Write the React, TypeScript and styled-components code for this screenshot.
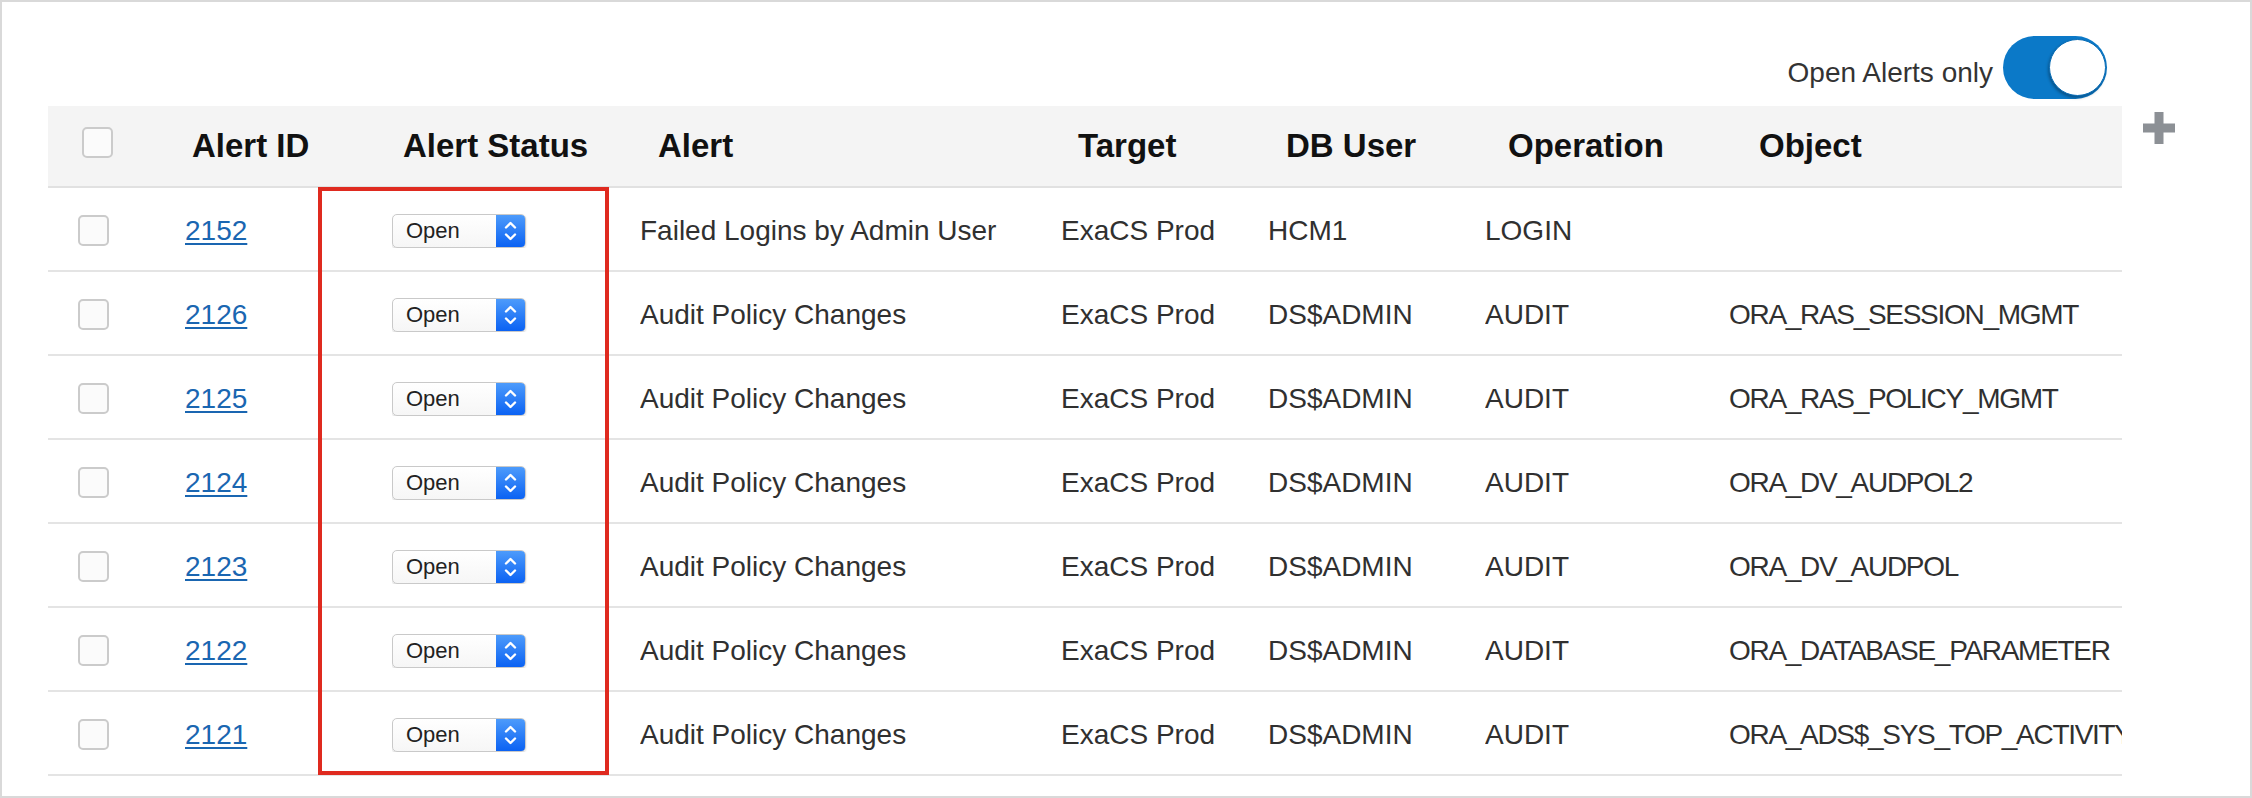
import React from "react";
import styled, { createGlobalStyle } from "styled-components";

const GlobalStyle = createGlobalStyle`
  html, body {
    margin: 0;
    padding: 0;
    background: #fff;
  }
  body {
    font-family: "Liberation Sans", Arial, sans-serif;
    color: #303030;
  }
`;

const HEADER_COLUMNS = "144px 211px 255px 420px 208px 222px 251px 363px";
const BODY_COLUMNS = "137px 207px 248px 421px 207px 217px 244px 393px";

type Alert = {
  id: string;
  name: string;
  target: string;
  dbUser: string;
  operation: string;
  object: string;
};

const alerts: Alert[] = [
  { id: "2152", name: "Failed Logins by Admin User", target: "ExaCS Prod", dbUser: "HCM1", operation: "LOGIN", object: "" },
  { id: "2126", name: "Audit Policy Changes", target: "ExaCS Prod", dbUser: "DS$ADMIN", operation: "AUDIT", object: "ORA_RAS_SESSION_MGMT" },
  { id: "2125", name: "Audit Policy Changes", target: "ExaCS Prod", dbUser: "DS$ADMIN", operation: "AUDIT", object: "ORA_RAS_POLICY_MGMT" },
  { id: "2124", name: "Audit Policy Changes", target: "ExaCS Prod", dbUser: "DS$ADMIN", operation: "AUDIT", object: "ORA_DV_AUDPOL2" },
  { id: "2123", name: "Audit Policy Changes", target: "ExaCS Prod", dbUser: "DS$ADMIN", operation: "AUDIT", object: "ORA_DV_AUDPOL" },
  { id: "2122", name: "Audit Policy Changes", target: "ExaCS Prod", dbUser: "DS$ADMIN", operation: "AUDIT", object: "ORA_DATABASE_PARAMETER" },
  { id: "2121", name: "Audit Policy Changes", target: "ExaCS Prod", dbUser: "DS$ADMIN", operation: "AUDIT", object: "ORA_ADS$_SYS_TOP_ACTIVITY" },
];

const headers = ["Alert ID", "Alert Status", "Alert", "Target", "DB User", "Operation", "Object"];

const Frame = styled.div`
  box-sizing: border-box;
  width: 2252px;
  height: 798px;
  border: 2px solid #d9d9d9;
  padding-left: 46px;
  overflow: hidden;
`;

const Toolbar = styled.div`
  box-sizing: border-box;
  width: 2074px;
  height: 104px;
  display: flex;
  justify-content: flex-end;
  align-items: flex-start;
  gap: 10px;
  padding: 34px 15px 0 0;
`;

const ToggleLabel = styled.span`
  margin-top: 21px;
  font-size: 28px;
  color: #333;
`;

const Track = styled.div<{ $on: boolean }>`
  box-sizing: border-box;
  width: 104px;
  height: 63px;
  border-radius: 32px;
  padding: 3px 1px 3px 3px;
  display: flex;
  justify-content: ${(p) => (p.$on ? "flex-end" : "flex-start")};
  background: ${(p) => (p.$on ? "#0b79c8" : "#c8c8c8")};
`;

const Knob = styled.div`
  box-sizing: border-box;
  width: 57px;
  height: 57px;
  border-radius: 50%;
  background: #fff;
  border: 1px solid #0a6db6;
  box-shadow: -1px 2px 3px rgba(0, 0, 0, 0.3);
`;

const TableArea = styled.div`
  display: flex;
  align-items: flex-start;
`;

const Table = styled.div`
  position: relative;
  width: 2074px;
`;

const Row = styled.div<{ $columns: string; $header?: boolean }>`
  box-sizing: border-box;
  display: grid;
  grid-template-columns: ${(p) => p.$columns};
  align-items: center;
  height: ${(p) => (p.$header ? "82px" : "84px")};
  padding-top: ${(p) => (p.$header ? "0" : "3px")};
  background: ${(p) => (p.$header ? "#f4f4f4" : "#fff")};
  border-bottom: 2px solid ${(p) => (p.$header ? "#e1e1e1" : "#e4e4e4")};
`;

const HeadCell = styled.div`
  font-size: 33px;
  font-weight: 700;
  color: #111;
  white-space: nowrap;
`;

const Cell = styled.div<{ $tight?: boolean }>`
  font-size: 28px;
  color: #303030;
  white-space: nowrap;
  overflow: hidden;
  letter-spacing: ${(p) => (p.$tight ? "-1.3px" : "normal")};
`;

const CheckCell = styled.div<{ $offset: number; $lift?: number }>`
  padding-left: ${(p) => p.$offset}px;
  margin-bottom: ${(p) => p.$lift ?? 0}px;
  display: flex;
`;

const Checkbox = styled.input.attrs({ type: "checkbox" })`
  appearance: none;
  margin: 0;
  box-sizing: border-box;
  width: 31px;
  height: 31px;
  border: 2px solid #cbcbcb;
  border-radius: 5px;
  background: #fbfbfb;
`;

const IdLink = styled.a`
  font-size: 28px;
  color: #1a66b1;
  text-decoration: underline;
  text-underline-offset: 3px;
  text-decoration-thickness: 2px;
`;

const Select = styled.div`
  box-sizing: border-box;
  width: 134px;
  height: 34px;
  display: flex;
  border: 1px solid #c9c9c9;
  border-radius: 5px;
  background: linear-gradient(#ffffff, #f6f6f6);
  box-shadow: 0 1px 2px rgba(0, 0, 0, 0.18);
  overflow: hidden;
`;

const SelectValue = styled.span`
  flex: 1;
  padding-left: 13px;
  font-size: 22px;
  line-height: 32px;
  color: #222;
`;

const SelectArrows = styled.span`
  width: 29px;
  display: flex;
  align-items: center;
  justify-content: center;
  background: linear-gradient(#4d9bfb, #0b62f3);
`;

const Highlight = styled.div`
  position: absolute;
  left: 270px;
  top: 81px;
  width: 291px;
  height: 588px;
  box-sizing: border-box;
  border: 4px solid #df2a1f;
  pointer-events: none;
`;

const AddButton = styled.button`
  margin: 6px 0 0 21px;
  padding: 0;
  border: none;
  background: none;
  width: 32px;
  height: 32px;
  display: flex;
`;

function StatusSelect() {
  return (
    <Select>
      <SelectValue>Open</SelectValue>
      <SelectArrows>
        <svg width="29" height="32" viewBox="0 0 29 32">
          <polyline points="10,12.5 14.5,8 19,12.5" fill="none" stroke="#fff" strokeWidth="2.4" strokeLinecap="round" strokeLinejoin="round" />
          <polyline points="10,19.5 14.5,24 19,19.5" fill="none" stroke="#fff" strokeWidth="2.4" strokeLinecap="round" strokeLinejoin="round" />
        </svg>
      </SelectArrows>
    </Select>
  );
}

export default function App() {
  return (
    <>
      <GlobalStyle />
      <Frame>
        <Toolbar>
          <ToggleLabel>Open Alerts only</ToggleLabel>
          <Track $on>
            <Knob />
          </Track>
        </Toolbar>

        <TableArea>
          <Table>
            <Row $columns={HEADER_COLUMNS} $header>
              <CheckCell $offset={34} $lift={7}>
                <Checkbox />
              </CheckCell>
              {headers.map((h) => (
                <HeadCell key={h}>{h}</HeadCell>
              ))}
            </Row>

            {alerts.map((a) => (
              <Row key={a.id} $columns={BODY_COLUMNS}>
                <CheckCell $offset={30}>
                  <Checkbox />
                </CheckCell>
                <Cell>
                  <IdLink href="#">{a.id}</IdLink>
                </Cell>
                <Cell>
                  <StatusSelect />
                </Cell>
                <Cell>{a.name}</Cell>
                <Cell>{a.target}</Cell>
                <Cell>{a.dbUser}</Cell>
                <Cell>{a.operation}</Cell>
                <Cell $tight>{a.object}</Cell>
              </Row>
            ))}

            <Highlight />
          </Table>

          <AddButton aria-label="Add column">
            <svg width="32" height="32" viewBox="0 0 32 32">
              <rect x="11.5" y="0" width="9" height="32" fill="#8c9095" />
              <rect x="0" y="11.5" width="32" height="9" fill="#8c9095" />
            </svg>
          </AddButton>
        </TableArea>
      </Frame>
    </>
  );
}
